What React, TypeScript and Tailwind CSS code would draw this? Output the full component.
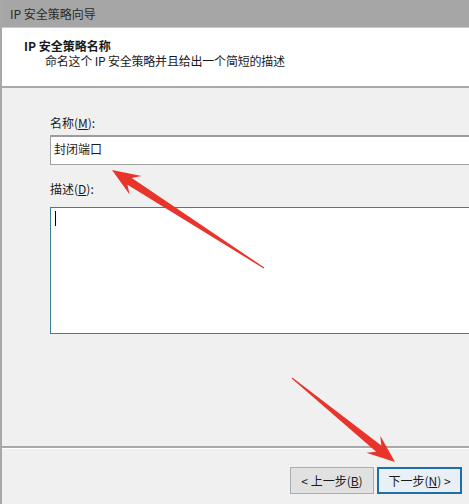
import React from 'react';

type Pt = [number, number];

// red annotation arrow, thin tail widening into a swept head
function arrowPoints(tail: Pt, tip: Pt, headLen: number, headHalf: number, neck: number, tailW: number) {
  const dx = tip[0] - tail[0];
  const dy = tip[1] - tail[1];
  const len = Math.hypot(dx, dy);
  const ux = dx / len;
  const uy = dy / len;
  const nx = -uy;
  const ny = ux;
  const at = (along: number, side: number): string =>
    `${(tail[0] + ux * along + nx * side).toFixed(1)},${(tail[1] + uy * along + ny * side).toFixed(1)}`;
  return [
    at(0, tailW),
    at(len - headLen * 0.75, neck),
    at(len - headLen, headHalf),
    at(len, 0),
    at(len - headLen, -headHalf),
    at(len - headLen * 0.75, -neck),
    at(0, -tailW),
  ].join(' ');
}

const font = { fontFamily: '"Noto Sans CJK SC", "Microsoft YaHei", sans-serif' };

export default function App() {
  return (
    <div
      className="relative w-[469px] h-[504px] overflow-hidden bg-[#f0f0f0] border-l-2 border-[#a8a8a8] text-[12px] text-[#1a1a1a]"
      style={font}
    >
      {/* Title bar */}
      <div className="h-[28px] bg-[#a6a6a6] border-b border-[#c9c9c9] flex items-center pl-[8px] text-[#2a2a2a]">
        IP 安全策略向导
      </div>

      {/* Header */}
      <div className="h-[60px] bg-white border-b-2 border-[#a9a9a9] pl-[22px] pt-[10px]">
        <div className="font-bold leading-[16px]">IP 安全策略名称</div>
        <div className="pl-[21px] leading-[16px] mt-[-1px] tracking-[-0.2px]">命名这个 IP 安全策略并且给出一个简短的描述</div>
      </div>

      {/* Body */}
      <div className="h-[360px] pl-[48px] pt-[27px] border-b-2 border-[#a9a9a9]">
        <div className="leading-[16px]">
          名称(<span className="underline">M</span>):
        </div>
        <div className="mt-[4px] w-[440px] h-[30px] bg-white border border-[#a0a0a0] border-t-2 border-t-[#9c9c9c] pl-[3px] pt-[4px] leading-[16px]">
          封闭端口
        </div>
        <div className="mt-[16px] leading-[16px]">
          描述(<span className="underline">D</span>):
        </div>
        <div className="mt-[10px] w-[440px] h-[127px] bg-white border border-[#3b7f9a] pl-[4px] pt-[3px]">
          <div className="w-[1px] h-[15px] bg-black" />
        </div>
      </div>

      {/* Buttons */}
      <div className="border-t border-white flex justify-start pl-[288px] pt-[18px] gap-[3px]">
        <button
          className="w-[84px] h-[27px] bg-[#e1e1e1] border border-[#adadad] text-[#1a1a1a] flex items-center justify-center"
          style={font}
        >
          &lt; 上一步(<span className="underline">B</span>)
        </button>
        <button
          className="w-[85px] h-[27px] bg-[#e8eff5] border-2 border-[#1d6fa5] text-[#1a1a1a] flex items-center justify-center"
          style={font}
        >
          下一步(<span className="underline">N</span>) &gt;
        </button>
      </div>

      {/* Annotation arrows */}
      <svg className="absolute left-0 top-0 pointer-events-none" width={469} height={504}>
        <polygon points={arrowPoints([262, 268], [110, 170], 28, 11, 4, 0.5)} fill="#e8342b" />
        <polygon points={arrowPoints([290, 378], [393, 462], 28, 11, 4, 0.5)} fill="#e8342b" />
      </svg>
    </div>
  );
}
